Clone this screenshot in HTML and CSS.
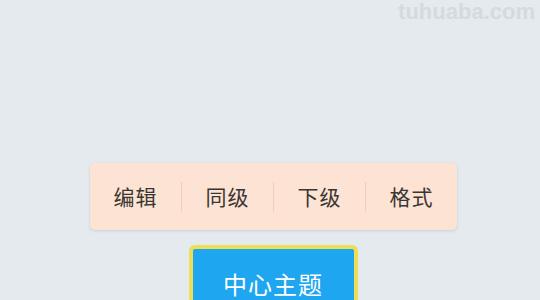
FILE: index.html
```html
<!DOCTYPE html>
<html lang="zh">
<head>
<meta charset="utf-8">
<link rel="stylesheet" href="styles.css">
</head>
<body>
<div class="page">
  <div class="watermark">tuhuaba.com</div>
  <div class="stage">
    <div class="menu">
      <div class="item">编辑</div>
      <div class="sep"></div>
      <div class="item">同级</div>
      <div class="sep"></div>
      <div class="item">下级</div>
      <div class="sep"></div>
      <div class="item">格式</div>
    </div>
    <div class="topic">中心主题</div>
  </div>
</div>
</body>
</html>
```
FILE: styles.css
```css
html, body {
  margin: 0;
  padding: 0;
}
body {
  background: #e4eaee;
  font-family: "Noto Sans CJK SC", "Noto Sans", sans-serif;
}
.page {
  width: 540px;
  height: 300px;
  overflow: hidden;
  position: relative;
}
.watermark {
  position: absolute;
  right: 5px;
  top: 0;
  font-family: "Liberation Sans", Arial, sans-serif;
  font-weight: bold;
  font-size: 22px;
  line-height: 24px;
  color: #d4dadf;
}
.stage {
  display: flex;
  flex-direction: column;
  align-items: center;
  padding-top: 163px;
}
.menu {
  margin-left: 7px;
  width: 367px;
  height: 67px;
  background: #fde3d3;
  border-radius: 5px;
  box-shadow: 0 1px 3px rgba(150, 160, 170, 0.35);
  display: flex;
  align-items: center;
}
.item {
  flex: 1;
  text-align: center;
  font-size: 21px;
  color: #3a3634;
  line-height: 1;
  letter-spacing: 1px;
}
.sep {
  width: 1px;
  height: 30px;
  background: #f2cdb9;
}
.topic {
  margin-top: 15px;
  margin-left: 6px;
  width: 161px;
  height: 60px;
  box-sizing: content-box;
  background: #1fa6f1;
  border: 4px solid #ecdf55;
  border-radius: 6px;
  color: #ffffff;
  font-size: 24px;
  display: flex;
  justify-content: center;
  align-items: center;
  padding-top: 4px;
  letter-spacing: 1px;
}
```
